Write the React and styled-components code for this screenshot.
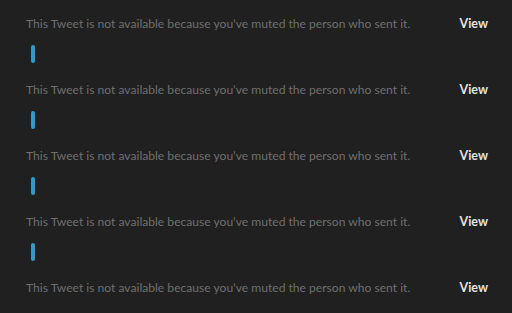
import React from 'react';
import styled, { createGlobalStyle } from 'styled-components';

const GlobalStyle = createGlobalStyle`
  html, body {
    margin: 0;
    padding: 0;
    background: #202020;
  }
`;

const Feed = styled.div`
  display: flex;
  flex-direction: column;
  padding: 12px 24px 0 26px;
  min-height: 313px;
  box-sizing: border-box;
  background: #202020;
  font-family: Lato, "Open Sans", sans-serif;
`;

const Row = styled.div`
  display: flex;
  align-items: center;
  justify-content: space-between;
  height: 22px;
`;

const Notice = styled.span`
  font-size: 12.1px;
  color: #6f6f6f;
  white-space: nowrap;
`;

const ViewButton = styled.button`
  background: none;
  border: none;
  padding: 0;
  font-family: inherit;
  font-size: 12.5px;
  font-weight: 700;
  color: #e2e2e2;
  cursor: pointer;
`;

const Connector = styled.div`
  height: 44px;
  display: flex;
  padding-left: 5px;
  padding-top: 11px;
  box-sizing: border-box;
`;

const ThreadLine = styled.div`
  width: 4px;
  height: 18px;
  border-radius: 2px;
  background: #2f9bc7;
`;

const items = [1, 2, 3, 4, 5];

const App = () => {
  return (
    <>
      <GlobalStyle />
      <Feed>
        {items.map((id, i) => (
          <React.Fragment key={id}>
            <Row>
              <Notice>This Tweet is not available because you’ve muted the person who sent it.</Notice>
              <ViewButton>View</ViewButton>
            </Row>
            {i < items.length - 1 && (
              <Connector>
                <ThreadLine />
              </Connector>
            )}
          </React.Fragment>
        ))}
      </Feed>
    </>
  );
};

export default App;
